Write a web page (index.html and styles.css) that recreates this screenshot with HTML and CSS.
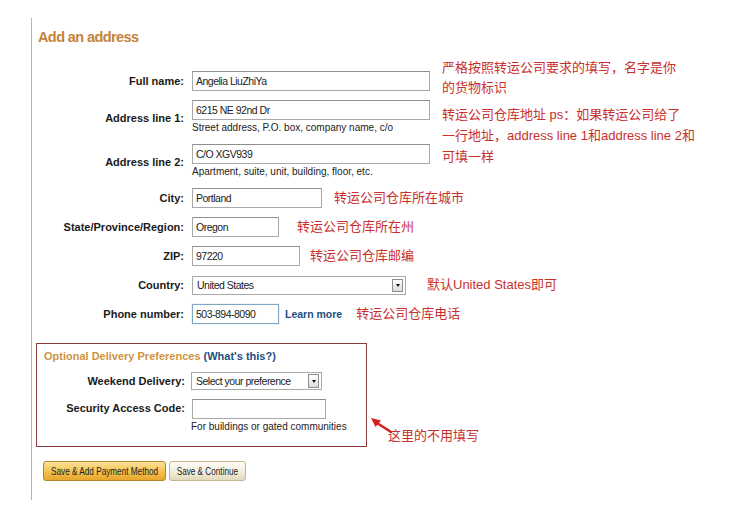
FILE: index.html
```html
<!DOCTYPE html>
<html lang="zh-CN">
<head>
  <meta charset="UTF-8" />
  <title>Add an address</title>
  <link rel="stylesheet" href="styles.css">
</head>
<body>

  <!-- 住所フォーム -->
  <div class="panel">
    <h2 class="title">Add an address</h2>

    <div class="form">
      <label class="label">Full name:</label>
      <input class="field f-name" value="Angelia LiuZhiYa" />
      <div class="note note-name">严格按照转运公司要求的填写，名字是你<br>的货物标识</div>

      <label class="label">Address line 1:</label>
      <div class="cell">
        <input class="field f-name" value="6215 NE 92nd Dr" />
        <div class="hint">Street address, P.O. box, company name, c/o</div>
      </div>
      <div class="note note-addr">转运公司仓库地址 ps：如果转运公司给了<br>一行地址，address line 1和address line 2和<br>可填一样</div>

      <label class="label">Address line 2:</label>
      <div class="cell">
        <input class="field f-name" value="C/O XGV939" />
        <div class="hint">Apartment, suite, unit, building, floor, etc.</div>
      </div>

      <label class="label">City:</label>
      <div class="cell wide inline">
        <input class="field f-city" value="Portland" />
        <span class="note">转运公司仓库所在城市</span>
      </div>

      <label class="label">State/Province/Region:</label>
      <div class="cell wide inline gap-state">
        <input class="field f-short" value="Oregon" />
        <span class="note">转运公司仓库所在州</span>
      </div>

      <label class="label">ZIP:</label>
      <div class="cell wide inline gap-zip">
        <input class="field f-zip" value="97220" />
        <span class="note">转运公司仓库邮编</span>
      </div>

      <label class="label">Country:</label>
      <div class="cell wide inline gap-country">
        <div class="select s-country"><span>United States</span><span class="select-arrow"></span></div>
        <span class="note">默认United States即可</span>
      </div>

      <label class="label">Phone number:</label>
      <div class="cell wide inline gap-phone">
        <input class="field f-short f-focus" value="503-894-8090" />
        <a class="link learn">Learn more</a>
        <span class="note">转运公司仓库电话</span>
      </div>
    </div>

    <div class="optional-row">
      <div class="optional">
        <div class="optional-title">Optional Delivery Preferences <a class="link">(What's this?)</a></div>
        <div class="opt-form">
          <label class="label">Weekend Delivery:</label>
          <div class="select s-weekend"><span>Select your preference</span><span class="select-arrow"></span></div>

          <label class="label">Security Access Code:</label>
          <div class="cell">
            <input class="field f-code" value="" />
            <div class="hint">For buildings or gated communities</div>
          </div>
        </div>
      </div>
      <div class="callout">
        <svg class="callout-arrow" width="24" height="18" viewBox="0 0 24 18">
          <path d="M21 15 L7 6" stroke="#d41f1f" stroke-width="2.6" stroke-linecap="round" fill="none"/>
          <path d="M1 1 L11 3.5 L5.5 10 Z" fill="#d41f1f"/>
        </svg>
        <span class="note">这里的不用填写</span>
      </div>
    </div>

    <div class="buttons">
      <button class="btn btn-gold"><span>Save &amp; Add Payment Method</span></button>
      <button class="btn btn-plain"><span>Save &amp; Continue</span></button>
    </div>
  </div>

</body>
</html>
```

FILE: styles.css
```css
/*── 全体 ──*/
body {
  margin: 0;
  background: #fff;
  color: #1a1a1a;
  font-family: "Liberation Sans", Arial, sans-serif;
}
.panel {
  margin: 18px 0 0 31px;
  height: 482px;
  box-sizing: border-box;
  border-left: 1px solid #b4b4b4;
  padding: 10px 0 0 4px;
}
.title {
  margin: 0 0 25px 2px;
  font-size: 14.5px;
  line-height: 18px;
  letter-spacing: -0.6px;
  color: #c4823a;
}

/*── フォーム ──*/
.form {
  display: grid;
  grid-template-columns: 148px 238px 1fr;
  column-gap: 8px;
  row-gap: 9px;
  align-items: center;
}
.label {
  text-align: right;
  font-size: 11px;
  font-weight: bold;
  color: #1a1a1a;
  white-space: nowrap;
}
.cell {
  display: flex;
  flex-direction: column;
}
.cell.wide {
  grid-column: 2 / 4;
}
.cell.inline {
  flex-direction: row;
  align-items: center;
  gap: 12px;
}
.gap-state { gap: 18px !important; }
.gap-zip { gap: 10px !important; }
.gap-country { gap: 21px !important; }
.gap-phone { gap: 6px !important; }
.gap-phone .note { margin-left: 8px; }

.field {
  height: 20px;
  box-sizing: border-box;
  margin: 0;
  padding: 0 3px;
  border: 1px solid #a9a9a9;
  border-top-color: #8f8f8f;
  background: #fff;
  font-family: "Liberation Sans", sans-serif;
  font-size: 10.5px;
  letter-spacing: -0.5px;
  color: #222;
  outline: none;
}
.f-name { width: 238px; }
.f-city { width: 130px; }
.f-short { width: 87px; }
.f-zip { width: 108px; }
.f-code { width: 134px; }
.f-focus {
  border-color: #7fa7c4;
  box-shadow: 0 0 1px #9cc0da;
}
.hint {
  font-size: 10px;
  line-height: 15px;
  color: #222;
  white-space: nowrap;
}

/*── 注釈（赤字） ──*/
.note {
  font-family: "Liberation Sans", "Noto Sans CJK SC", sans-serif;
  font-size: 13px;
  line-height: 20px;
  color: #c8302e;
  white-space: nowrap;
}
.note-name {
  margin: -13px 0 -7px 4px;
  align-self: start;
}
.note-addr {
  grid-row: span 2;
  align-self: start;
  margin: 4px 0 0 4px;
  line-height: 21px;
}

/*── セレクト ──*/
.select {
  display: flex;
  align-items: center;
  justify-content: space-between;
  height: 19px;
  box-sizing: border-box;
  border: 1px solid #a9a9a9;
  padding: 0 2px 0 4px;
  font-size: 10.5px;
  letter-spacing: -0.5px;
  color: #222;
  background: #fff;
  white-space: nowrap;
}
.s-country { width: 214px; }
.s-weekend { width: 131px; height: 18px; }
.select-arrow {
  display: flex;
  align-items: center;
  justify-content: center;
  flex: none;
  width: 9px;
  height: 11px;
  border: 1px solid #8d8d8d;
  background: linear-gradient(#fff, #dcdcdc);
}
.s-weekend .select-arrow {
  height: 12px;
}
.select-arrow::after {
  content: "";
  border-left: 2.5px solid transparent;
  border-right: 2.5px solid transparent;
  border-top: 3px solid #111;
}

.link {
  color: #1d4f82;
  font-weight: bold;
  cursor: pointer;
}
.learn {
  font-size: 10.5px;
}

/*── オプション枠 ──*/
.optional-row {
  display: flex;
  align-items: flex-end;
  gap: 3px;
  margin-top: 19px;
}
.optional {
  width: 331px;
  box-sizing: border-box;
  border: 1px solid #8e3b3b;
  padding: 4px 0 12px 7px;
}
.optional-title {
  font-size: 11px;
  line-height: 16px;
  font-weight: bold;
  color: #d0933f;
}
.opt-form {
  display: grid;
  grid-template-columns: 141px auto;
  column-gap: 6px;
  row-gap: 9px;
  align-items: center;
  justify-content: start;
  margin-top: 8px;
}
.opt-form .label {
  align-self: start;
  line-height: 19px;
}
.opt-form .label:first-child {
  line-height: 18px;
}
.opt-form .cell .field {
  margin-left: 1px;
}
.callout {
  display: flex;
  align-items: flex-start;
  margin-bottom: 1px;
}
.callout-arrow {
  flex: none;
}
.callout .note {
  margin: 9px 0 0 -6px;
}

/*── ボタン ──*/
.buttons {
  display: flex;
  gap: 3px;
  margin: 14px 0 0 7px;
}
.btn {
  display: flex;
  align-items: center;
  justify-content: center;
  height: 20px;
  box-sizing: border-box;
  padding: 0;
  border-radius: 3px;
  font-family: "Liberation Sans", sans-serif;
  font-size: 10.5px;
  color: #222;
  white-space: nowrap;
  cursor: pointer;
}
.btn span {
  flex: none;
  transform: scaleX(0.78);
}
.btn-gold {
  width: 123px;
  border: 1px solid #b3862d;
  background: linear-gradient(#fbe39a, #f3c14c 55%, #e9a62c);
}
.btn-plain {
  width: 77px;
  border: 1px solid #c2b792;
  background: linear-gradient(#fefdf7, #f1ecd9 60%, #e2d9bb);
}
```
